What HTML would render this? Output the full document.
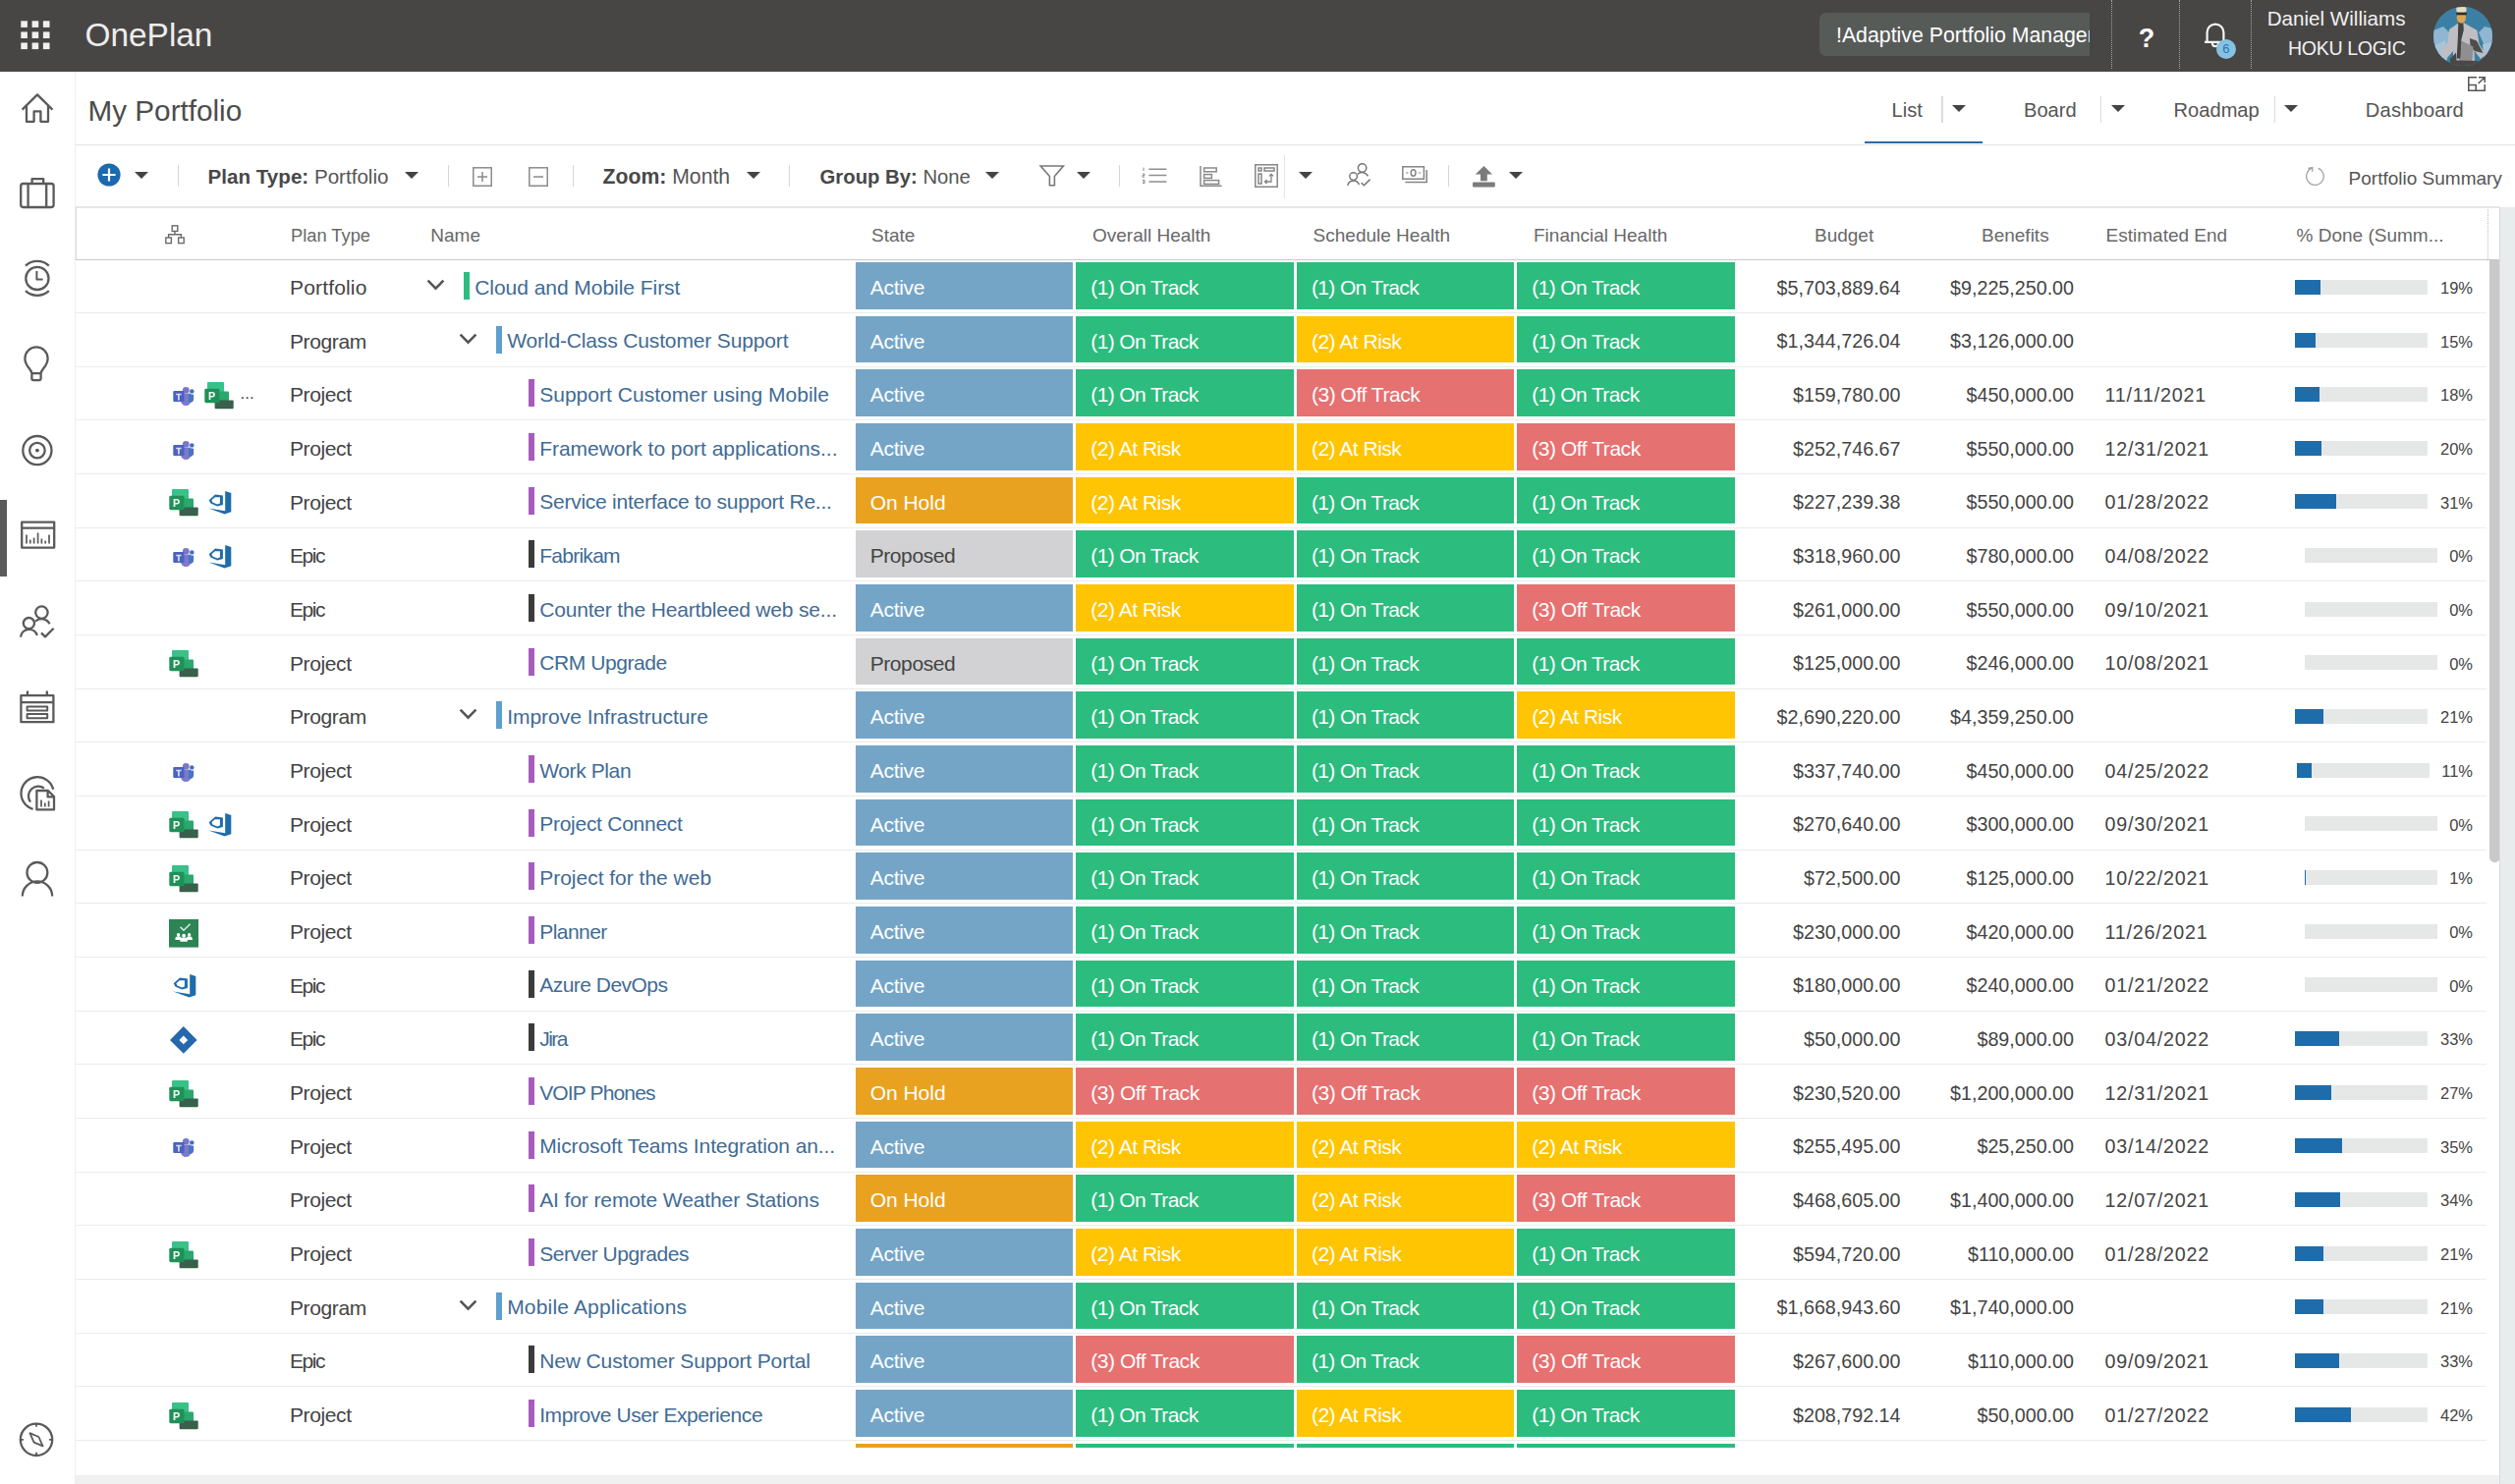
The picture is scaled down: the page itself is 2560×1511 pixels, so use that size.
<!DOCTYPE html>
<html lang="en">
<head>
<meta charset="utf-8">
<title>OnePlan - My Portfolio</title>
<style>
*{box-sizing:border-box;margin:0;padding:0}
html,body{width:2560px;height:1511px;overflow:hidden;background:#fff}
body{position:relative;font-family:"Liberation Sans",sans-serif;color:#444;font-size:21px;line-height:1}
.abs{position:absolute}
svg{position:absolute;overflow:visible}
/* top bar */
#top{position:absolute;left:0;top:0;width:2560px;height:72.7px;background:#484644;overflow:hidden}
#brand{position:absolute;left:86.5px;top:15.5px;font-size:33.4px;color:#ededed;line-height:40px;white-space:nowrap}
#pill{position:absolute;left:1852px;top:13px;width:274.5px;height:44px;background:#575b58;border-radius:7px 0 0 7px;overflow:hidden;white-space:nowrap;color:#fff;font-size:21.3px;line-height:47px;padding-left:17px}
.vsep{position:absolute;top:0;height:70px;width:0;border-left:1.4px dotted #a5a5a5}
#q{position:absolute;left:2170px;top:22.8px;width:30px;text-align:center;font-size:27px;font-weight:bold;color:#fff;line-height:32px}
#uname{position:absolute;right:111.5px;top:3.5px;text-align:right;color:#f1f1f1;white-space:nowrap}
#uname div{height:30px;line-height:30px}
#badge{position:absolute;left:2255.7px;top:39.7px;width:20.6px;height:20.6px;border-radius:50%;background:#86c3e2;color:#2a76b4;font-size:13px;line-height:20.6px;text-align:center}
#avatar{position:absolute;left:2477.3px;top:7.2px;width:60px;height:60px;border-radius:50%;overflow:hidden;background:#4b8fae}
/* sidebar */
#side{position:absolute;left:0;top:72.7px;width:76.5px;height:1439px;background:#fff;border-right:1.3px solid #efefef}
#act{position:absolute;left:0;top:509px;width:6.5px;height:77.6px;background:#5a5a5a}
/* title + tabs */
#title{position:absolute;left:89.5px;top:92.8px;font-size:29.7px;line-height:40px;color:#4c4c4c;white-space:nowrap}
.hl{position:absolute;height:1.4px;background:#e4e4e2}
.tab{position:absolute;top:98px;font-size:20.1px;line-height:28px;color:#555;white-space:nowrap}
.tsep{position:absolute;top:98px;width:1.3px;height:27px;background:#dcdcdc}
.tri{position:absolute;width:0;height:0;border-left:7px solid transparent;border-right:7px solid transparent;border-top:7.6px solid #444}
/* toolbar */
.tb{position:absolute;top:166px;font-size:20.6px;line-height:28px;color:#555;white-space:nowrap}
.tb b{color:#484848}
.sep{position:absolute;top:168px;width:1.4px;height:22px;background:#d6d6d6}
/* grid header */
.hd{position:absolute;top:227.2px;font-size:19px;line-height:26px;color:#686868;white-space:nowrap}
/* rows */
.row{position:absolute;left:77px;width:2454px;height:54.67px;border-bottom:1.5px solid #eaecec}
.row>*{position:absolute}
.row span{white-space:nowrap}
.pt{left:218px;top:15.4px;line-height:26px;font-size:21px;color:#444}
.nm{top:15.3px;line-height:26px;font-size:21px;color:#3f6b95}
.chev{width:19px;height:12px;top:19.5px;margin-left:-77px}
.cb{width:6px;height:27.8px;top:12.6px;margin-left:-77px}
.nm{margin-left:-77px}
.bG{background:#2dbd80}.bB{background:#5e9fd0}.bP{background:#a75cbd}.bK{background:#3b3b3b}
.cell{top:2.6px;height:47.5px;width:221.6px;color:#fff;font-size:21px;line-height:52.6px;padding-left:15.3px;white-space:nowrap}
.c0{left:793.6px;padding-left:15.1px}.c1{left:1018px}.c2{left:1242.6px}.c3{left:1467px}
.last .cell{height:4.6px}
.sA{background:#74a5c7}.sH{background:#e9a21f}.sP{background:#d2d2d4;color:#444}
.h1{background:#2cbc7e}.h2{background:#ffc402}.h3{background:#e67171}
.num{top:15px;line-height:26px;font-size:19.7px;color:#444}
.bud{right:596.5px}.ben{right:420px}.dt{left:2065.5px;letter-spacing:.8px}
.pg{right:14px;top:14px;height:26px;white-space:nowrap;display:flex;align-items:center}
.pg span{font-size:16.5px;line-height:26px;color:#444;margin-left:12.5px;position:relative;top:1.5px}
.pb{display:block;width:135px;height:15px;background:#e6e8e8;position:relative;top:0.5px}
.pb b{display:block;height:100%;background:#1f6cab}
.ic{width:30px;height:30px;top:15px;margin-left:-77px}
.dots{top:14.6px;font-size:17px;line-height:26px;color:#444;margin-left:-77px;letter-spacing:0}
</style>
</head>
<body>
<svg width="0" height="0" style="position:absolute">
<defs>
<symbol id="i-teams" viewBox="0 0 30 30">
 <g transform="translate(4.2 4.7) scale(.935 .92) translate(-4.2 -4.1)">
  <circle cx="18.2" cy="8" r="3.6" fill="#7b76c9"/>
  <circle cx="24.6" cy="9.2" r="2.4" fill="#3f6fc0"/>
  <path d="M13 11.5h9.5a1.2 1.2 0 0 1 1.2 1.2v6.8a5.6 5.6 0 0 1-11.2 0z" fill="#7d79cb"/>
  <path d="M21 12.5h4.6a1 1 0 0 1 1 1v4.6a3.6 3.6 0 0 1-5.6 3z" fill="#4a74c2"/>
  <rect x="4.3" y="8.8" width="12" height="12" rx="1.2" fill="#4a63bd"/>
  <path d="M7.4 11.8h5.8v1.7h-2v5.6H9.4v-5.6h-2z" fill="#dcdcf0"/>
 </g>
</symbol>
<symbol id="i-proj" viewBox="0 0 30 30">
  <rect x="3" y="0" width="17" height="13.700" rx="1" fill="#38c28a"/>
  <rect x="12" y="9.5" width="13" height="11.5" rx="1" fill="#2aa86e"/>
  <rect x="10.6" y="18.6" width="19.1" height="8.7" rx="1" fill="#38604b"/>
  <rect x="0.3" y="6.8" width="15.2" height="14.4" rx="1.4" fill="#1f9158"/>
  <path d="M4.6 10h3.6a2.7 2.7 0 0 1 0 5.400H6.400v2.600H4.600zM6.400 11.500v2.400h1.600a1.200 1.200 0 0 0 0-2.400z" fill="#eef8f2"/>
</symbol>
<symbol id="i-azure" viewBox="0 0 30 30">
  <path d="M21.2 2.100L27.300 3.900V23.200L20.600 25.400 4.400 19.600 21.200 22.200z" fill="#1f6cab"/>
  <path d="M18.900 6.500L11.100 5.500 4.700 11.200 6.400 14.600 13.200 17.600 18.900 15.900zM15.900 8.200v6.400l-2.700 1-4.800-2-1-2.400 3.400-3z" fill="#1f6cab" fill-rule="evenodd"/>
</symbol>
<symbol id="i-planner" viewBox="0 0 30 30">
 <g transform="translate(0 -1.9)">
  <rect x="0" y="0.5" width="30" height="30" fill="#2c8454"/>
  <path d="M11.6 9.8l3.4 3.4 6.6-6.600" fill="none" stroke="#d8eee2" stroke-width="1.500"/>
  <circle cx="9.600" cy="17.600" r="1.700" fill="#fff"/><path d="M6.400 23v-1.200a3.200 2.600 0 0 1 6.400 0V23z" fill="#fff"/>
  <circle cx="20.600" cy="17.600" r="1.700" fill="#fff"/><path d="M17.400 23v-1.200a3.200 2.600 0 0 1 6.400 0V23z" fill="#fff"/>
  <circle cx="15.100" cy="18.600" r="1.900" fill="#fff"/><path d="M11.400 24.600v-1.400a3.700 2.800 0 0 1 7.400 0v1.400z" fill="#fff"/>
 </g>
</symbol>
<symbol id="i-jira" viewBox="0 0 30 30">
  <path d="M14.8 0.100L28.600 13.900 14.800 27.700 1 13.900z" fill="#2568ae"/>
  <path d="M14.800 9.500L19.200 13.900 14.800 18.300 10.400 13.900z" fill="#fff"/>
</symbol>
</defs>
</svg>

<!-- ============ TOP BAR ============ -->
<div id="top">
  <svg style="left:21px;top:20.6px" width="30" height="30" viewBox="0 0 30 30" fill="#f0f0f0">
    <rect x="0.3" y="0.3" width="6.6" height="6.6"/><rect x="11.6" y="0.3" width="6.6" height="6.6"/><rect x="22.9" y="0.3" width="6.6" height="6.6"/>
    <rect x="0.3" y="11.4" width="6.6" height="6.6"/><rect x="11.6" y="11.4" width="6.6" height="6.6"/><rect x="22.9" y="11.4" width="6.6" height="6.6"/>
    <rect x="0.3" y="22.5" width="6.6" height="6.6"/><rect x="11.6" y="22.5" width="6.6" height="6.6"/><rect x="22.9" y="22.5" width="6.6" height="6.6"/>
  </svg>
  <div id="brand">OnePlan</div>
  <div id="pill">!Adaptive Portfolio Manager</div>
  <i class="vsep" style="left:2148.6px"></i><i class="vsep" style="left:2217.9px"></i><i class="vsep" style="left:2291px"></i>
  <div id="q">?</div>
  <svg style="left:2243px;top:22px" width="24" height="26" viewBox="0 0 24 26"><path d="M3.6 20.6V11a8.4 8.4 0 0 1 16.8 0v9.6M1 20.8h22M9 21v1.2a3 3 0 0 0 6 0V21" fill="none" stroke="#f4f4f4" stroke-width="2.2"/></svg>
  <div id="badge">6</div>
  <div id="uname"><div style="font-size:20.6px">Daniel Williams</div><div style="font-size:19.6px;letter-spacing:-.35px">HOKU LOGIC</div></div>
  <div id="avatar">
    <svg style="left:0;top:0" width="60" height="60" viewBox="0 0 60 60">
      <rect width="60" height="60" fill="#3b80a4"/>
      <path d="M0 24l10-4 8 8-4 14-8 14-6 2zM60 22l-8-2-6 6 6 14 2 18 6 2z" fill="#8fb6d3"/>
      <path d="M0 40l12-6 2 20-14 6zM60 36l-10 2 2 22h8z" fill="#a9c4d8"/>
      <path d="M24.500 17l-8.500 6-1.500 13-7.500 10.500 6.500 6 6.500-7.500v11l22 .5-.5-12 6.500 8.500 5-4.500-6.500-11-2-13.500-14-8z" fill="#bfbec3"/>
      <path d="M37 32l7 2.500 6.500 12.500-8.500-2-4.500-4.500z" fill="#4d4d4c"/>
      <path d="M27.500 34l13 6.500-1 14.500h-13.500z" fill="#8f8f90"/>
      <path d="M25.300 15l5 .5.500 8-2.500 10-1 19h-3.600l1.100-20z" fill="#434343"/>
      <path d="M17 53l6-6.500.500 8 22 .500 2.500 5h-31z" fill="#4a4846"/>
      <ellipse cx="28.400" cy="10.500" rx="4.700" ry="6.200" fill="#dba552"/>
      <rect x="23.300" y="0" width="10.200" height="5.600" rx="1.500" fill="#e6dcc0"/>
      <rect x="23.300" y="5.700" width="10.400" height="2.600" fill="#2e2e2e"/>
    </svg>
  </div>
</div>

<!-- ============ SIDEBAR ============ -->
<div id="side"></div>
<i id="act"></i>
<svg id="sideicons" style="left:0;top:0" width="76" height="1511" viewBox="0 0 76 1511" fill="none" stroke="#5a5a5a" stroke-width="2.3" stroke-linejoin="round">
  <!-- home -->
  <path d="M22.6 111.6L38 96.4l15.4 15.2M27 108v15.8h7.6v-10.4h6.8v10.4H49V108"/>
  <!-- briefcase -->
  <rect x="21.2" y="187" width="33.4" height="24" rx="2.4"/><path d="M32.6 186.6v-4.4h11.6v4.4M28.6 187v24M47.2 187v24"/>
  <!-- clock -->
  <circle cx="37.9" cy="283.4" r="11.6"/><path d="M37.4 276v8.4h6.2" stroke-width="2"/><path d="M26 270.6a17.6 17.6 0 0 1 23.8 0M26 296.2a17.6 17.6 0 0 0 23.8 0"/>
  <!-- bulb -->
  <path d="M32.4 380.2c0-4-7-7-7-15.2a11.6 11.6 0 0 1 23.200 0c0 8.200-7 11.200-7 15.200zM32.400 380.400v5.200a1.600 1.600 0 0 0 1.600 1.600h6a1.600 1.600 0 0 0 1.600-1.600v-5.200"/>
  <!-- target -->
  <circle cx="37.9" cy="458.6" r="14.6"/><circle cx="37.9" cy="458.6" r="7.8"/><circle cx="37.9" cy="458.6" r="1.9" fill="#565656" stroke="none"/>
  <!-- chart window -->
  <rect x="22.2" y="531.6" width="33" height="26" /><path d="M22.200 537.600h33"/>
  <path d="M27 553.600v-9M30.800 553.600v-4M34.600 553.600v-6M38.600 553.600v-11M42.400 553.600v-5M46.200 553.600v-3M50 553.600v-9" stroke-width="1.700"/>
  <!-- people check -->
  <circle cx="42.4" cy="623.6" r="6.2"/><circle cx="29.4" cy="634.600" r="5.600"/>
  <path d="M21 648.600a8.600 8.600 0 0 1 16.800-1.600M36 632.600a9.400 9.400 0 0 1 14.600 2.600M42 644.400l4 4 8.600-8.600"/>
  <!-- calendar -->
  <rect x="21.4" y="708.200" width="33" height="27" /><path d="M21.400 715.200h33M28 703.400v5M47.800 703.400v5"/>
  <rect x="27.600" y="719.400" width="20.600" height="4.200" stroke-width="2"/><rect x="27.600" y="727" width="20.600" height="4.200" stroke-width="2"/>
  <!-- report -->
  <path d="M33.600 823.800a16.600 16.600 0 1 1 20.600-20"/><path d="M31 816.600a10 10 0 0 1 14-14"/>
  <path d="M37.400 805h11.600l6 6v13.400h-17.600zM48.600 805v6.400h6.400"/><path d="M42 821.400v-7M45.800 821.400v-4M49.600 821.400v-6" stroke-width="1.700"/>
  <!-- person -->
  <circle cx="37.900" cy="888.400" r="10.400"/><path d="M22.800 912.600a15.200 15.200 0 0 1 30.400 0"/>
  <!-- compass -->
  <circle cx="37" cy="1465.800" r="16.200"/><path d="M37 1449.600v3.200M37 1478.800v3.200M20.800 1465.800h3.200M50 1465.800h3.200" stroke-width="1.800"/>
  <path d="M30.400 1459.200l9 3.800 4.200 9.400-9-3.800z" stroke-width="1.800"/>
</svg>

<!-- ============ TITLE + TABS ============ -->
<div id="title">My Portfolio</div>
<i class="hl" style="left:77px;top:146.8px;width:2483px"></i>
<span class="tab" style="left:1925.5px">List</span><i class="tsep" style="left:1976.4px"></i><i class="tri" style="left:1986.6px;top:106.6px"></i>
<i class="abs" style="left:1898px;top:143.6px;width:119.6px;height:2.6px;background:#2b6aa2"></i>
<span class="tab" style="left:2060px">Board</span><i class="tsep" style="left:2137.6px"></i><i class="tri" style="left:2148.6px;top:106.6px"></i>
<span class="tab" style="left:2212.6px">Roadmap</span><i class="tsep" style="left:2314.8px"></i><i class="tri" style="left:2325px;top:106.6px"></i>
<span class="tab" style="left:2407.8px;top:97.9px;letter-spacing:.2px">Dashboard</span>
<svg style="left:2511.6px;top:78.2px" width="18" height="15" viewBox="0 0 18 15" fill="none" stroke="#555" stroke-width="1.500"><path d="M9 0.800H0.800v13.400h16.400V8M0.800 8.400h7.400v5.800M11 0.800h6.200V6M17 1l-6.400 6"/></svg>

<!-- ============ TOOLBAR ============ -->
<svg style="left:98.800px;top:166.200px" width="24" height="24" viewBox="0 0 24 24"><circle cx="12" cy="12" r="11.600" fill="#1b69ae"/><path d="M12 5.400v13.200M5.400 12h13.200" stroke="#fff" stroke-width="2.200"/></svg>
<i class="tri" style="left:137px;top:174.600px"></i>
<i class="sep" style="left:180.600px"></i>
<span class="tb" style="left:211.600px"><b>Plan Type:</b> Portfolio</span><i class="tri" style="left:412px;top:174.600px"></i>
<i class="sep" style="left:455.800px"></i>
<svg style="left:481.400px;top:169.600px" width="20" height="20" viewBox="0 0 20 20" fill="none" stroke="#8a8a8a" stroke-width="1.500"><rect x="0.800" y="0.800" width="18.400" height="18.400"/><path d="M10 5v10M5 10h10"/></svg>
<svg style="left:538px;top:169.600px" width="20" height="20" viewBox="0 0 20 20" fill="none" stroke="#8a8a8a" stroke-width="1.500"><rect x="0.800" y="0.800" width="18.400" height="18.400"/><path d="M5 10h10"/></svg>
<i class="sep" style="left:583px"></i>
<span class="tb" style="left:613.600px;font-size:21.200px"><b>Zoom:</b> Month</span><i class="tri" style="left:759.600px;top:174.600px"></i>
<i class="sep" style="left:802.600px"></i>
<span class="tb" style="left:834.600px;font-size:20.300px"><b>Group By:</b> None</span><i class="tri" style="left:1003px;top:174.600px"></i>
<!-- funnel -->
<svg style="left:1057.600px;top:168px" width="26" height="22" viewBox="0 0 26 22" fill="none" stroke="#777" stroke-width="1.600"><path d="M1.200 1h23.200l-9 10.600v9.200h-5V11.600z"/></svg>
<i class="tri" style="left:1096px;top:175px"></i>
<i class="sep" style="left:1139px"></i>
<!-- list -->
<svg style="left:1162px;top:169.600px" width="26" height="17" viewBox="0 0 26 17" fill="none" stroke="#8e8e8e" stroke-width="1.500"><path d="M7.400 2.200h18M7.400 8.600h18M7.400 15h18"/><path d="M2 0.600v3.400M1 7h2v1.600H1v1.600h2M1 13.400h2v3.200H1M1 15h2" stroke-width="1"/></svg>
<!-- gantt -->
<svg style="left:1220.600px;top:168.600px" width="23" height="21" viewBox="0 0 23 21" fill="none" stroke="#8a8a8a" stroke-width="1.500"><path d="M1 0v20.200h21.600"/><rect x="4.600" y="2" width="12.600" height="3.800"/><rect x="4.600" y="8.600" width="7.800" height="3.800"/><rect x="4.600" y="14.600" width="15" height="3.800"/></svg>
<!-- board -->
<svg style="left:1277px;top:167px" width="24" height="24" viewBox="0 0 24 24" fill="none" stroke="#858585" stroke-width="1.500"><rect x="0.800" y="0.800" width="22.400" height="22.400"/><rect x="4" y="4" width="3" height="3"/><rect x="10" y="4" width="10" height="3"/><rect x="4" y="10" width="3" height="10"/><path d="M10.600 18h6.400v-7.600M12.600 16l-2.200 2 2.200 2M15 12.400l2-2.200 2 2.200" stroke-width="1.300"/></svg>
<i class="abs" style="left:1306.800px;top:157.500px;width:1.300px;height:44px;background:#e4e4e4"></i>
<i class="tri" style="left:1321.600px;top:175px"></i>
<!-- people check -->
<svg style="left:1370.600px;top:166.400px" width="25" height="24" viewBox="0 0 25 24" fill="none" stroke="#777" stroke-width="1.500"><circle cx="15.600" cy="5" r="4.200"/><circle cx="6.600" cy="13.600" r="3.800"/><path d="M0.800 23a6 6 0 0 1 11.600-1M10.800 11.400a6.600 6.600 0 0 1 10.600 2M14.600 20l2.800 2.800 6.200-6.200"/></svg>
<!-- money -->
<svg style="left:1427px;top:169px" width="26" height="18" viewBox="0 0 26 18" fill="none" stroke="#858585" stroke-width="1.500"><rect x="0.800" y="0.800" width="21.600" height="12.400"/><path d="M3.400 16.600h21.800V4"/><ellipse cx="11.600" cy="7" rx="2.400" ry="3.200"/><path d="M4 7h2.400M16.800 7h2.400" stroke-width="1.200"/></svg>
<i class="sep" style="left:1474px"></i>
<!-- upload -->
<svg style="left:1499px;top:169px" width="23" height="22" viewBox="0 0 23 22" fill="#7b7b7b"><path d="M11.400 0L20 8.400h-5.200v6.800H8V8.400H2.800z"/><rect x="0" y="16.600" width="22.800" height="4.800" rx="1"/></svg>
<i class="tri" style="left:1536.300px;top:175px"></i>
<!-- refresh -->
<svg style="left:2345px;top:168px" width="22" height="22" viewBox="0 0 22 22" fill="none" stroke="#a2a2a2" stroke-width="1.300"><path d="M8.600 3.200A8.800 8.800 0 1 0 14.600 3.300M4.400 3.500L8.800 2.600V6.800"/></svg>
<span class="tb" style="left:2390.600px;top:167.5px;font-size:19px;color:#555">Portfolio Summary</span>

<i class="hl" style="left:77px;top:209.800px;width:2467px;height:2px;background:#e6e7e5"></i>

<!-- ============ GRID HEADER ============ -->
<i class="abs" style="left:76.800px;top:211px;width:1.400px;height:54px;background:#d9d9d6"></i>
<i class="abs" style="left:2532px;top:213px;width:0;height:51px;border-left:1.300px dotted #bdbdbd"></i>
<i class="hl" style="left:77px;top:263.700px;width:2467px;height:1.500px;background:#c9c9c9"></i>
<svg style="left:167.800px;top:229px" width="20" height="20" viewBox="0 0 20 20" fill="none" stroke="#6a6a6a" stroke-width="1.400"><rect x="7.200" y="0.800" width="5.600" height="5.600"/><rect x="0.800" y="13" width="5.600" height="5.600"/><rect x="13.600" y="13" width="5.600" height="5.600"/><path d="M10 6.400v3.400M3.600 13V9.800h12.800V13"/></svg>
<span class="hd" style="left:296px;font-size:18.300px">Plan Type</span>
<span class="hd" style="left:438.300px">Name</span>
<span class="hd" style="left:887px">State</span>
<span class="hd" style="left:1112px">Overall Health</span>
<span class="hd" style="left:1336.600px">Schedule Health</span>
<span class="hd" style="left:1561px">Financial Health</span>
<span class="hd" style="left:1847px">Budget</span>
<span class="hd" style="left:2017px">Benefits</span>
<span class="hd" style="left:2143.600px">Estimated End</span>
<span class="hd" style="left:2337.600px">% Done (Summ...</span>

<!-- ============ ROWS ============ -->
<div class="row" style="top:264.50px"><span class="pt" style="letter-spacing:0.159px">Portfolio</span><svg class="chev" style="left:434.4px" viewBox="0 0 19 12"><path d="M1.6 1.6 L9.5 9.6 L17.4 1.6" fill="none" stroke="#555" stroke-width="2.6"/></svg><i class="cb bG" style="left:472px"></i><span class="nm" style="left:483.2px;letter-spacing:-0.042px">Cloud and Mobile First</span><div class="cell c0 sA" style="letter-spacing:-0.277px">Active</div><div class="cell c1 h1" style="letter-spacing:-0.622px">(1) On Track</div><div class="cell c2 h1" style="letter-spacing:-0.622px">(1) On Track</div><div class="cell c3 h1" style="letter-spacing:-0.622px">(1) On Track</div><span class="num bud">$5,703,889.64</span><span class="num ben">$9,225,250.00</span><div class="pg"><i class="pb"><b style="width:19%"></b></i><span>19%</span></div></div>
<div class="row" style="top:319.17px"><span class="pt" style="letter-spacing:-0.389px">Program</span><svg class="chev" style="left:467.4px" viewBox="0 0 19 12"><path d="M1.6 1.6 L9.5 9.6 L17.4 1.6" fill="none" stroke="#555" stroke-width="2.6"/></svg><i class="cb bB" style="left:505px"></i><span class="nm" style="left:516.2px;letter-spacing:-0.144px">World-Class Customer Support</span><div class="cell c0 sA" style="letter-spacing:-0.277px">Active</div><div class="cell c1 h1" style="letter-spacing:-0.622px">(1) On Track</div><div class="cell c2 h2" style="letter-spacing:-0.489px">(2) At Risk</div><div class="cell c3 h1" style="letter-spacing:-0.622px">(1) On Track</div><span class="num bud">$1,344,726.04</span><span class="num ben">$3,126,000.00</span><div class="pg"><i class="pb"><b style="width:15%"></b></i><span>15%</span></div></div>
<div class="row" style="top:373.83px"><svg class="ic" style="left:172px" viewBox="0 0 30 30"><use href="#i-teams"/></svg><svg class="ic" style="left:207.5px" viewBox="0 0 30 30"><use href="#i-proj"/></svg><span class="dots" style="left:244.6px">...</span><span class="pt" style="letter-spacing:-0.392px">Project</span><i class="cb bP" style="left:538px"></i><span class="nm" style="left:549.2px;letter-spacing:0.023px">Support Customer using Mobile</span><div class="cell c0 sA" style="letter-spacing:-0.277px">Active</div><div class="cell c1 h1" style="letter-spacing:-0.622px">(1) On Track</div><div class="cell c2 h3" style="letter-spacing:-0.453px">(3) Off Track</div><div class="cell c3 h1" style="letter-spacing:-0.622px">(1) On Track</div><span class="num bud">$159,780.00</span><span class="num ben">$450,000.00</span><span class="num dt">11/11/2021</span><div class="pg"><i class="pb"><b style="width:18%"></b></i><span>18%</span></div></div>
<div class="row" style="top:428.50px"><svg class="ic" style="left:172px" viewBox="0 0 30 30"><use href="#i-teams"/></svg><span class="pt" style="letter-spacing:-0.392px">Project</span><i class="cb bP" style="left:538px"></i><span class="nm" style="left:549.2px;letter-spacing:-0.041px">Framework to port applications...</span><div class="cell c0 sA" style="letter-spacing:-0.277px">Active</div><div class="cell c1 h2" style="letter-spacing:-0.489px">(2) At Risk</div><div class="cell c2 h2" style="letter-spacing:-0.489px">(2) At Risk</div><div class="cell c3 h3" style="letter-spacing:-0.453px">(3) Off Track</div><span class="num bud">$252,746.67</span><span class="num ben">$550,000.00</span><span class="num dt">12/31/2021</span><div class="pg"><i class="pb"><b style="width:20%"></b></i><span>20%</span></div></div>
<div class="row" style="top:483.17px"><svg class="ic" style="left:172px" viewBox="0 0 30 30"><use href="#i-proj"/></svg><svg class="ic" style="left:207.5px" viewBox="0 0 30 30"><use href="#i-azure"/></svg><span class="pt" style="letter-spacing:-0.392px">Project</span><i class="cb bP" style="left:538px"></i><span class="nm" style="left:549.2px;letter-spacing:-0.246px">Service interface to support Re...</span><div class="cell c0 sH" style="letter-spacing:-0.021px">On Hold</div><div class="cell c1 h2" style="letter-spacing:-0.489px">(2) At Risk</div><div class="cell c2 h1" style="letter-spacing:-0.622px">(1) On Track</div><div class="cell c3 h1" style="letter-spacing:-0.622px">(1) On Track</div><span class="num bud">$227,239.38</span><span class="num ben">$550,000.00</span><span class="num dt">01/28/2022</span><div class="pg"><i class="pb"><b style="width:31%"></b></i><span>31%</span></div></div>
<div class="row" style="top:537.84px"><svg class="ic" style="left:172px" viewBox="0 0 30 30"><use href="#i-teams"/></svg><svg class="ic" style="left:207.5px" viewBox="0 0 30 30"><use href="#i-azure"/></svg><span class="pt" style="letter-spacing:-1.415px">Epic</span><i class="cb bK" style="left:538px"></i><span class="nm" style="left:549.2px;letter-spacing:-0.733px">Fabrikam</span><div class="cell c0 sP" style="letter-spacing:-0.414px">Proposed</div><div class="cell c1 h1" style="letter-spacing:-0.622px">(1) On Track</div><div class="cell c2 h1" style="letter-spacing:-0.622px">(1) On Track</div><div class="cell c3 h1" style="letter-spacing:-0.622px">(1) On Track</div><span class="num bud">$318,960.00</span><span class="num ben">$780,000.00</span><span class="num dt">04/08/2022</span><div class="pg"><i class="pb"><b style="width:0%"></b></i><span>0%</span></div></div>
<div class="row" style="top:592.50px"><span class="pt" style="letter-spacing:-1.415px">Epic</span><i class="cb bK" style="left:538px"></i><span class="nm" style="left:549.2px;letter-spacing:-0.173px">Counter the Heartbleed web se...</span><div class="cell c0 sA" style="letter-spacing:-0.277px">Active</div><div class="cell c1 h2" style="letter-spacing:-0.489px">(2) At Risk</div><div class="cell c2 h1" style="letter-spacing:-0.622px">(1) On Track</div><div class="cell c3 h3" style="letter-spacing:-0.453px">(3) Off Track</div><span class="num bud">$261,000.00</span><span class="num ben">$550,000.00</span><span class="num dt">09/10/2021</span><div class="pg"><i class="pb"><b style="width:0%"></b></i><span>0%</span></div></div>
<div class="row" style="top:647.17px"><svg class="ic" style="left:172px" viewBox="0 0 30 30"><use href="#i-proj"/></svg><span class="pt" style="letter-spacing:-0.392px">Project</span><i class="cb bP" style="left:538px"></i><span class="nm" style="left:549.2px;letter-spacing:-0.421px">CRM Upgrade</span><div class="cell c0 sP" style="letter-spacing:-0.414px">Proposed</div><div class="cell c1 h1" style="letter-spacing:-0.622px">(1) On Track</div><div class="cell c2 h1" style="letter-spacing:-0.622px">(1) On Track</div><div class="cell c3 h1" style="letter-spacing:-0.622px">(1) On Track</div><span class="num bud">$125,000.00</span><span class="num ben">$246,000.00</span><span class="num dt">10/08/2021</span><div class="pg"><i class="pb"><b style="width:0%"></b></i><span>0%</span></div></div>
<div class="row" style="top:701.84px"><span class="pt" style="letter-spacing:-0.389px">Program</span><svg class="chev" style="left:467.4px" viewBox="0 0 19 12"><path d="M1.6 1.6 L9.5 9.6 L17.4 1.6" fill="none" stroke="#555" stroke-width="2.6"/></svg><i class="cb bB" style="left:505px"></i><span class="nm" style="left:516.2px;letter-spacing:-0.029px">Improve Infrastructure</span><div class="cell c0 sA" style="letter-spacing:-0.277px">Active</div><div class="cell c1 h1" style="letter-spacing:-0.622px">(1) On Track</div><div class="cell c2 h1" style="letter-spacing:-0.622px">(1) On Track</div><div class="cell c3 h2" style="letter-spacing:-0.489px">(2) At Risk</div><span class="num bud">$2,690,220.00</span><span class="num ben">$4,359,250.00</span><div class="pg"><i class="pb"><b style="width:21%"></b></i><span>21%</span></div></div>
<div class="row" style="top:756.50px"><svg class="ic" style="left:172px" viewBox="0 0 30 30"><use href="#i-teams"/></svg><span class="pt" style="letter-spacing:-0.392px">Project</span><i class="cb bP" style="left:538px"></i><span class="nm" style="left:549.2px;letter-spacing:-0.384px">Work Plan</span><div class="cell c0 sA" style="letter-spacing:-0.277px">Active</div><div class="cell c1 h1" style="letter-spacing:-0.622px">(1) On Track</div><div class="cell c2 h1" style="letter-spacing:-0.622px">(1) On Track</div><div class="cell c3 h1" style="letter-spacing:-0.622px">(1) On Track</div><span class="num bud">$337,740.00</span><span class="num ben">$450,000.00</span><span class="num dt">04/25/2022</span><div class="pg"><i class="pb"><b style="width:11%"></b></i><span>11%</span></div></div>
<div class="row" style="top:811.17px"><svg class="ic" style="left:172px" viewBox="0 0 30 30"><use href="#i-proj"/></svg><svg class="ic" style="left:207.5px" viewBox="0 0 30 30"><use href="#i-azure"/></svg><span class="pt" style="letter-spacing:-0.392px">Project</span><i class="cb bP" style="left:538px"></i><span class="nm" style="left:549.2px;letter-spacing:-0.265px">Project Connect</span><div class="cell c0 sA" style="letter-spacing:-0.277px">Active</div><div class="cell c1 h1" style="letter-spacing:-0.622px">(1) On Track</div><div class="cell c2 h1" style="letter-spacing:-0.622px">(1) On Track</div><div class="cell c3 h1" style="letter-spacing:-0.622px">(1) On Track</div><span class="num bud">$270,640.00</span><span class="num ben">$300,000.00</span><span class="num dt">09/30/2021</span><div class="pg"><i class="pb"><b style="width:0%"></b></i><span>0%</span></div></div>
<div class="row" style="top:865.84px"><svg class="ic" style="left:172px" viewBox="0 0 30 30"><use href="#i-proj"/></svg><span class="pt" style="letter-spacing:-0.392px">Project</span><i class="cb bP" style="left:538px"></i><span class="nm" style="left:549.2px;letter-spacing:-0.010px">Project for the web</span><div class="cell c0 sA" style="letter-spacing:-0.277px">Active</div><div class="cell c1 h1" style="letter-spacing:-0.622px">(1) On Track</div><div class="cell c2 h1" style="letter-spacing:-0.622px">(1) On Track</div><div class="cell c3 h1" style="letter-spacing:-0.622px">(1) On Track</div><span class="num bud">$72,500.00</span><span class="num ben">$125,000.00</span><span class="num dt">10/22/2021</span><div class="pg"><i class="pb"><b style="width:1%"></b></i><span>1%</span></div></div>
<div class="row" style="top:920.50px"><svg class="ic" style="left:172px" viewBox="0 0 30 30"><use href="#i-planner"/></svg><span class="pt" style="letter-spacing:-0.392px">Project</span><i class="cb bP" style="left:538px"></i><span class="nm" style="left:549.2px;letter-spacing:-0.548px">Planner</span><div class="cell c0 sA" style="letter-spacing:-0.277px">Active</div><div class="cell c1 h1" style="letter-spacing:-0.622px">(1) On Track</div><div class="cell c2 h1" style="letter-spacing:-0.622px">(1) On Track</div><div class="cell c3 h1" style="letter-spacing:-0.622px">(1) On Track</div><span class="num bud">$230,000.00</span><span class="num ben">$420,000.00</span><span class="num dt">11/26/2021</span><div class="pg"><i class="pb"><b style="width:0%"></b></i><span>0%</span></div></div>
<div class="row" style="top:975.17px"><svg class="ic" style="left:172px" viewBox="0 0 30 30"><use href="#i-azure"/></svg><span class="pt" style="letter-spacing:-1.415px">Epic</span><i class="cb bK" style="left:538px"></i><span class="nm" style="left:549.2px;letter-spacing:-0.522px">Azure DevOps</span><div class="cell c0 sA" style="letter-spacing:-0.277px">Active</div><div class="cell c1 h1" style="letter-spacing:-0.622px">(1) On Track</div><div class="cell c2 h1" style="letter-spacing:-0.622px">(1) On Track</div><div class="cell c3 h1" style="letter-spacing:-0.622px">(1) On Track</div><span class="num bud">$180,000.00</span><span class="num ben">$240,000.00</span><span class="num dt">01/21/2022</span><div class="pg"><i class="pb"><b style="width:0%"></b></i><span>0%</span></div></div>
<div class="row" style="top:1029.84px"><svg class="ic" style="left:172px" viewBox="0 0 30 30"><use href="#i-jira"/></svg><span class="pt" style="letter-spacing:-1.415px">Epic</span><i class="cb bK" style="left:538px"></i><span class="nm" style="left:549.2px;letter-spacing:-1.517px">Jira</span><div class="cell c0 sA" style="letter-spacing:-0.277px">Active</div><div class="cell c1 h1" style="letter-spacing:-0.622px">(1) On Track</div><div class="cell c2 h1" style="letter-spacing:-0.622px">(1) On Track</div><div class="cell c3 h1" style="letter-spacing:-0.622px">(1) On Track</div><span class="num bud">$50,000.00</span><span class="num ben">$89,000.00</span><span class="num dt">03/04/2022</span><div class="pg"><i class="pb"><b style="width:33%"></b></i><span>33%</span></div></div>
<div class="row" style="top:1084.51px"><svg class="ic" style="left:172px" viewBox="0 0 30 30"><use href="#i-proj"/></svg><span class="pt" style="letter-spacing:-0.392px">Project</span><i class="cb bP" style="left:538px"></i><span class="nm" style="left:549.2px;letter-spacing:-0.856px">VOIP Phones</span><div class="cell c0 sH" style="letter-spacing:-0.021px">On Hold</div><div class="cell c1 h3" style="letter-spacing:-0.453px">(3) Off Track</div><div class="cell c2 h3" style="letter-spacing:-0.453px">(3) Off Track</div><div class="cell c3 h3" style="letter-spacing:-0.453px">(3) Off Track</div><span class="num bud">$230,520.00</span><span class="num ben">$1,200,000.00</span><span class="num dt">12/31/2021</span><div class="pg"><i class="pb"><b style="width:27%"></b></i><span>27%</span></div></div>
<div class="row" style="top:1139.17px"><svg class="ic" style="left:172px" viewBox="0 0 30 30"><use href="#i-teams"/></svg><span class="pt" style="letter-spacing:-0.392px">Project</span><i class="cb bP" style="left:538px"></i><span class="nm" style="left:549.2px;letter-spacing:-0.105px">Microsoft Teams Integration an...</span><div class="cell c0 sA" style="letter-spacing:-0.277px">Active</div><div class="cell c1 h2" style="letter-spacing:-0.489px">(2) At Risk</div><div class="cell c2 h2" style="letter-spacing:-0.489px">(2) At Risk</div><div class="cell c3 h2" style="letter-spacing:-0.489px">(2) At Risk</div><span class="num bud">$255,495.00</span><span class="num ben">$25,250.00</span><span class="num dt">03/14/2022</span><div class="pg"><i class="pb"><b style="width:35%"></b></i><span>35%</span></div></div>
<div class="row" style="top:1193.84px"><span class="pt" style="letter-spacing:-0.392px">Project</span><i class="cb bP" style="left:538px"></i><span class="nm" style="left:549.2px;letter-spacing:-0.111px">AI for remote Weather Stations</span><div class="cell c0 sH" style="letter-spacing:-0.021px">On Hold</div><div class="cell c1 h1" style="letter-spacing:-0.622px">(1) On Track</div><div class="cell c2 h2" style="letter-spacing:-0.489px">(2) At Risk</div><div class="cell c3 h3" style="letter-spacing:-0.453px">(3) Off Track</div><span class="num bud">$468,605.00</span><span class="num ben">$1,400,000.00</span><span class="num dt">12/07/2021</span><div class="pg"><i class="pb"><b style="width:34%"></b></i><span>34%</span></div></div>
<div class="row" style="top:1248.51px"><svg class="ic" style="left:172px" viewBox="0 0 30 30"><use href="#i-proj"/></svg><span class="pt" style="letter-spacing:-0.392px">Project</span><i class="cb bP" style="left:538px"></i><span class="nm" style="left:549.2px;letter-spacing:-0.467px">Server Upgrades</span><div class="cell c0 sA" style="letter-spacing:-0.277px">Active</div><div class="cell c1 h2" style="letter-spacing:-0.489px">(2) At Risk</div><div class="cell c2 h2" style="letter-spacing:-0.489px">(2) At Risk</div><div class="cell c3 h1" style="letter-spacing:-0.622px">(1) On Track</div><span class="num bud">$594,720.00</span><span class="num ben">$110,000.00</span><span class="num dt">01/28/2022</span><div class="pg"><i class="pb"><b style="width:21%"></b></i><span>21%</span></div></div>
<div class="row" style="top:1303.17px"><span class="pt" style="letter-spacing:-0.389px">Program</span><svg class="chev" style="left:467.4px" viewBox="0 0 19 12"><path d="M1.6 1.6 L9.5 9.6 L17.4 1.6" fill="none" stroke="#555" stroke-width="2.6"/></svg><i class="cb bB" style="left:505px"></i><span class="nm" style="left:516.2px;letter-spacing:0.173px">Mobile Applications</span><div class="cell c0 sA" style="letter-spacing:-0.277px">Active</div><div class="cell c1 h1" style="letter-spacing:-0.622px">(1) On Track</div><div class="cell c2 h1" style="letter-spacing:-0.622px">(1) On Track</div><div class="cell c3 h1" style="letter-spacing:-0.622px">(1) On Track</div><span class="num bud">$1,668,943.60</span><span class="num ben">$1,740,000.00</span><div class="pg"><i class="pb"><b style="width:21%"></b></i><span>21%</span></div></div>
<div class="row" style="top:1357.84px"><span class="pt" style="letter-spacing:-1.415px">Epic</span><i class="cb bK" style="left:538px"></i><span class="nm" style="left:549.2px;letter-spacing:-0.121px">New Customer Support Portal</span><div class="cell c0 sA" style="letter-spacing:-0.277px">Active</div><div class="cell c1 h3" style="letter-spacing:-0.453px">(3) Off Track</div><div class="cell c2 h1" style="letter-spacing:-0.622px">(1) On Track</div><div class="cell c3 h3" style="letter-spacing:-0.453px">(3) Off Track</div><span class="num bud">$267,600.00</span><span class="num ben">$110,000.00</span><span class="num dt">09/09/2021</span><div class="pg"><i class="pb"><b style="width:33%"></b></i><span>33%</span></div></div>
<div class="row" style="top:1412.51px"><svg class="ic" style="left:172px" viewBox="0 0 30 30"><use href="#i-proj"/></svg><span class="pt" style="letter-spacing:-0.392px">Project</span><i class="cb bP" style="left:538px"></i><span class="nm" style="left:549.2px;letter-spacing:-0.433px">Improve User Experience</span><div class="cell c0 sA" style="letter-spacing:-0.277px">Active</div><div class="cell c1 h1" style="letter-spacing:-0.622px">(1) On Track</div><div class="cell c2 h2" style="letter-spacing:-0.489px">(2) At Risk</div><div class="cell c3 h1" style="letter-spacing:-0.622px">(1) On Track</div><span class="num bud">$208,792.14</span><span class="num ben">$50,000.00</span><span class="num dt">01/27/2022</span><div class="pg"><i class="pb"><b style="width:42%"></b></i><span>42%</span></div></div>
<div class="row last" style="top:1467.17px;border:none">
<div class="cell c0 sH"></div><div class="cell c1 h1"></div><div class="cell c2 h1"></div><div class="cell c3 h1"></div>
</div>

<!-- scrollbar + right/bottom panels -->
<i class="abs" style="left:2534px;top:265px;width:10.600px;height:613.400px;background:#c9c9c9;border-radius:0 0 5.300px 5.300px"></i>
<i class="abs" style="left:2544px;top:211px;width:16px;height:1300px;background:#e9eced;border-left:1.200px solid #dcdcd6"></i>
<i class="abs" style="left:77px;top:1501.600px;width:2467px;height:10px;background:#f0f0f0"></i>
</body>
</html>
